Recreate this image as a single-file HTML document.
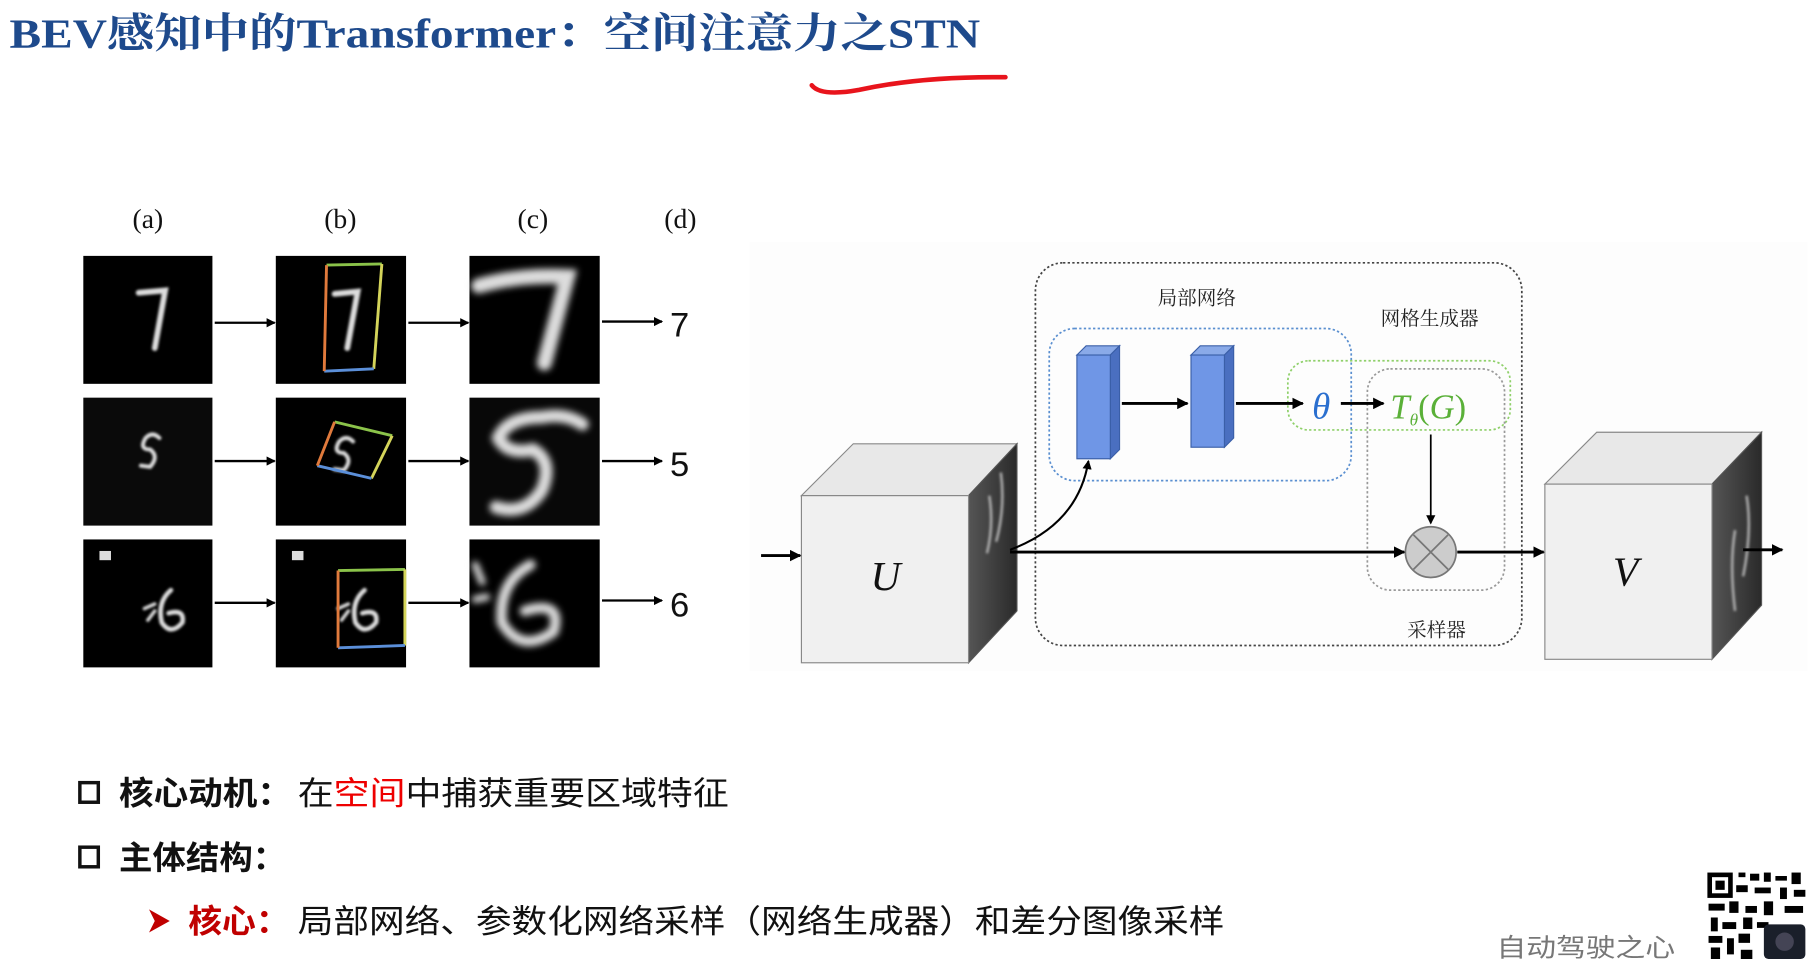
<!DOCTYPE html>
<html><head><meta charset="utf-8"><style>
html,body{margin:0;padding:0;background:#fff;overflow:hidden}
svg{display:block}
</style></head><body>
<svg width="1808" height="959" viewBox="0 0 1568 832" xmlns="http://www.w3.org/2000/svg">
<defs>
<filter id="bl" x="-50%" y="-50%" width="200%" height="200%"><feGaussianBlur stdDeviation="1.2"/></filter>
<filter id="bl2" x="-50%" y="-50%" width="200%" height="200%"><feGaussianBlur stdDeviation="3"/></filter>
<marker id="ah" markerWidth="8" markerHeight="8" refX="7" refY="4" orient="auto" markerUnits="userSpaceOnUse"><path d="M0,0 L8,4 L0,8 z" fill="#000"/></marker>
<marker id="ah2" markerWidth="10" markerHeight="10" refX="9" refY="5" orient="auto" markerUnits="userSpaceOnUse"><path d="M0,0 L10,5 L0,10 z" fill="#000"/></marker>
<linearGradient id="side" x1="0" x2="1"><stop offset="0" stop-color="#555"/><stop offset="1" stop-color="#2a2a2a"/></linearGradient>
</defs>

<text x="8" y="41" font-size="36" font-weight="bold" fill="#1e4a8c" font-family="'Liberation Serif','Noto Serif CJK SC',serif" textLength="842" lengthAdjust="spacingAndGlyphs">BEV感知中的Transformer：空间注意力之STN</text>
<path d="M704,74 Q712,84 745,78 Q800,66 872,67" stroke="#e8141c" stroke-width="4" fill="none" stroke-linecap="round"/>

<g font-family="'Liberation Serif',serif" font-size="24" fill="#111" text-anchor="middle">
<text x="128" y="198">(a)</text><text x="295" y="198">(b)</text><text x="462" y="198">(c)</text><text x="590" y="198">(d)</text>
</g>

<g fill="#000">
<rect x="72" y="222" width="112" height="111"/><rect x="239" y="222" width="113" height="111"/><rect x="407" y="222" width="113" height="111"/>
<rect x="72" y="345" width="112" height="111" fill="#0a0a0a"/><rect x="239" y="345" width="113" height="111"/><rect x="407" y="345" width="113" height="111" fill="#080808"/>
<rect x="72" y="468" width="112" height="111"/><rect x="239" y="468" width="113" height="111"/><rect x="407" y="468" width="113" height="111"/>
</g>
<g stroke="#ddd" fill="none" stroke-linecap="round" filter="url(#bl)">
<path d="M120,254 L143,252 L134,302" stroke-width="5"/>
<path d="M290,255 L310,253 L301,302" stroke-width="5"/>
<path d="M138,380 Q132,374 126,380 Q120,390 130,390 Q138,396 130,405 L122,404" stroke-width="3.5"/>
<path d="M306,383 Q300,377 294,383 Q288,393 298,393 Q306,399 298,408 L290,407" stroke-width="3.5"/>
<path d="M148,512 Q136,522 140,540 Q148,552 158,540 Q160,528 146,532" stroke-width="4"/>
<path d="M316,512 Q304,522 308,540 Q316,552 326,540 Q328,528 314,532" stroke-width="4"/>
<path d="M125,528 L134,524 M128,538 L134,530" stroke-width="3"/>
<path d="M293,528 L302,524 M296,538 L302,530" stroke-width="3"/>
</g>
<g fill="#ddd"><rect x="86" y="478" width="10" height="8"/><rect x="253" y="478" width="10" height="8"/></g>
<g stroke="#ddd" fill="none" stroke-linecap="round" filter="url(#bl2)">
<path d="M415,248 Q450,238 492,240 L472,315" stroke-width="13"/>
<path d="M505,368 Q490,358 470,362 Q440,362 432,380 Q440,395 462,390 Q480,400 470,425 Q455,448 430,440" stroke-width="11"/>
<path d="M460,490 Q432,505 435,540 Q452,568 480,548 Q488,520 455,530" stroke-width="9"/>
<path d="M412,490 L418,505 M412,520 L422,518" stroke-width="6"/>
</g>
<g fill="none" stroke-width="2.5">
<path d="M283,230 L331,229" stroke="#8bc34a"/><path d="M331,229 L324,320" stroke="#d4d45a"/><path d="M324,320 L281,322" stroke="#5b8fd9"/><path d="M281,322 L283,230" stroke="#e07a3c"/>
<path d="M290,366 L340,378" stroke="#8bc34a"/><path d="M340,378 L322,415" stroke="#d4d45a"/><path d="M322,415 L275,404" stroke="#5b8fd9"/><path d="M275,404 L290,366" stroke="#e07a3c"/>
<path d="M293,495 L351,494" stroke="#8bc34a"/><path d="M351,494 L351,560" stroke="#d4d45a"/><path d="M351,560 L293,562" stroke="#5b8fd9"/><path d="M293,562 L293,495" stroke="#e07a3c"/>
</g>
<g stroke="#000" stroke-width="2" marker-end="url(#ah)">
<line x1="186" y1="280" x2="238" y2="280"/><line x1="354" y1="280" x2="406" y2="280"/><line x1="522" y1="279" x2="574" y2="279"/>
<line x1="186" y1="400" x2="238" y2="400"/><line x1="354" y1="400" x2="406" y2="400"/><line x1="522" y1="400" x2="574" y2="400"/>
<line x1="186" y1="523" x2="238" y2="523"/><line x1="354" y1="523" x2="406" y2="523"/><line x1="522" y1="521" x2="574" y2="521"/>
</g>
<g font-family="'Liberation Sans',sans-serif" font-size="30" fill="#111">
<text x="581" y="292">7</text><text x="581" y="413">5</text><text x="581" y="535">6</text>
</g>

<rect x="650" y="210" width="918" height="372" fill="#fdfdfd"/>

<rect x="898" y="228" width="422" height="332" rx="24" fill="none" stroke="#444" stroke-width="1.5" stroke-dasharray="2 2"/>
<text x="1038" y="264" text-anchor="middle" font-size="17" fill="#222" font-family="'Liberation Serif','Noto Serif CJK SC',serif">局部网络</text>
<text x="1240" y="282" text-anchor="middle" font-size="17" fill="#222" font-family="'Liberation Serif','Noto Serif CJK SC',serif">网格生成器</text>
<text x="1246" y="552" text-anchor="middle" font-size="17" fill="#222" font-family="'Liberation Serif','Noto Serif CJK SC',serif">采样器</text>

<rect x="910" y="285" width="262" height="132" rx="22" fill="none" stroke="#5a8fd0" stroke-width="1.5" stroke-dasharray="2 2"/>
<rect x="1117" y="313" width="193" height="60" rx="18" fill="none" stroke="#8fd06a" stroke-width="1.5" stroke-dasharray="2 2"/>
<rect x="1186" y="320" width="119" height="192" rx="20" fill="none" stroke="#999" stroke-width="1.5" stroke-dasharray="2 2"/>

<g stroke="#3a5fa8" stroke-width="1">
<polygon points="934,308 942,300 971,300 963,308" fill="#8aaae8"/>
<polygon points="963,308 971,300 971,390 963,398" fill="#4a6fc0"/>
<rect x="934" y="308" width="29" height="90" fill="#6f96e6"/>
<polygon points="1033,308 1041,300 1070,300 1062,308" fill="#8aaae8"/>
<polygon points="1062,308 1070,300 1070,380 1062,388" fill="#4a6fc0"/>
<rect x="1033" y="308" width="29" height="80" fill="#6f96e6"/>
</g>
<g stroke="#000" stroke-width="2.5" marker-end="url(#ah2)">
<line x1="973" y1="350" x2="1030" y2="350"/>
<line x1="1072" y1="350" x2="1130" y2="350"/>
<line x1="1163" y1="350" x2="1200" y2="350"/>
</g>
<text x="1146" y="363" text-anchor="middle" font-size="32" font-style="italic" fill="#2a6fcf" font-family="'Liberation Serif',serif">θ</text>
<text x="1206" y="363" font-size="30" font-style="italic" fill="#5ab038" font-family="'Liberation Serif',serif">T<tspan font-size="15" dy="6">θ</tspan><tspan dy="-6" font-style="normal">(</tspan>G<tspan font-style="normal">)</tspan></text>
<line x1="1241" y1="377" x2="1241" y2="454" stroke="#000" stroke-width="1.5" marker-end="url(#ah)"/>
<circle cx="1241" cy="479" r="22" fill="#ccc" stroke="#777" stroke-width="1.5"/>
<path d="M1226,464 L1256,494 M1256,464 L1226,494" stroke="#777" stroke-width="1.5"/>

<polygon points="695,430 740,385 882,385 840,430" fill="#e8e8e8" stroke="#888"/>
<polygon points="840,430 882,385 882,530 840,575" fill="url(#side)" stroke="#555"/>
<rect x="695" y="430" width="145" height="145" fill="#f0f0f0" stroke="#888"/>
<path d="M858,430 Q862,455 856,480 M868,410 Q872,440 864,470" stroke="#bbb" stroke-width="2" fill="none" filter="url(#bl)"/>
<text x="768" y="512" text-anchor="middle" font-size="36" font-style="italic" fill="#111" font-family="'Liberation Serif',serif">U</text>
<polygon points="1340,420 1385,375 1528,375 1485,420" fill="#e8e8e8" stroke="#888"/>
<polygon points="1485,420 1528,375 1528,525 1485,572" fill="url(#side)" stroke="#555"/>
<rect x="1340" y="420" width="145" height="152" fill="#f0f0f0" stroke="#888"/>
<path d="M1505,460 Q1500,490 1505,530 M1515,430 Q1520,460 1512,500" stroke="#bbb" stroke-width="2" fill="none" filter="url(#bl)"/>
<text x="1410" y="508" text-anchor="middle" font-size="36" font-style="italic" fill="#111" font-family="'Liberation Serif',serif">V</text>

<g stroke="#000" stroke-width="2.5" fill="none">
<line x1="660" y1="482" x2="694" y2="482" marker-end="url(#ah2)"/>
<line x1="876" y1="479" x2="1218" y2="479" marker-end="url(#ah2)"/>
<line x1="1264" y1="479" x2="1339" y2="479" marker-end="url(#ah2)"/>
<line x1="1512" y1="477" x2="1546" y2="477" marker-end="url(#ah2)"/>
<path d="M876,477 Q935,455 944,400" stroke-width="1.8" marker-end="url(#ah)"/>
</g>

<g font-size="28" fill="#111" font-family="'Liberation Sans','Noto Sans CJK SC',sans-serif">
<rect x="69" y="679" width="16" height="17" fill="none" stroke="#111" stroke-width="3"/>
<text x="103" y="698" font-weight="bold" textLength="150" lengthAdjust="spacingAndGlyphs">核心动机：</text>
<text x="258" y="698" textLength="374" lengthAdjust="spacingAndGlyphs">在<tspan fill="#e00">空间</tspan>中捕获重要区域特征</text>
<rect x="69" y="735" width="16" height="17" fill="none" stroke="#111" stroke-width="3"/>
<text x="103" y="754" font-weight="bold" textLength="145" lengthAdjust="spacingAndGlyphs">主体结构：</text>
<path d="M129,789 L147,799 L129,809 L134,799 z" fill="#c00000"/>
<text x="163" y="809" font-weight="bold" fill="#c00000" textLength="88" lengthAdjust="spacingAndGlyphs">核心：</text>
<text x="258" y="809" textLength="804" lengthAdjust="spacingAndGlyphs">局部网络、参数化网络采样（网络生成器）和差分图像采样</text>
</g>
<text x="1298" y="830" font-size="22" fill="#777" font-family="'Liberation Sans','Noto Sans CJK SC',sans-serif" textLength="155" lengthAdjust="spacingAndGlyphs">自动驾驶之心</text>

<g>
<rect x="1480" y="755" width="88" height="77" fill="#fff"/>
<rect x="1481" y="757" width="22" height="22" fill="#000"/><rect x="1485" y="761" width="14" height="14" fill="#fff"/><rect x="1488" y="764" width="8" height="8" fill="#000"/>
<g fill="#000">
<rect x="1508" y="757" width="6" height="4"/><rect x="1518" y="758" width="8" height="6"/><rect x="1530" y="757" width="6" height="8"/><rect x="1540" y="760" width="10" height="4"/><rect x="1554" y="757" width="8" height="10"/>
<rect x="1506" y="768" width="10" height="6"/><rect x="1522" y="770" width="14" height="5"/><rect x="1544" y="770" width="6" height="10"/><rect x="1556" y="772" width="10" height="6"/>
<rect x="1482" y="784" width="14" height="6"/><rect x="1500" y="782" width="8" height="10"/><rect x="1514" y="786" width="10" height="6"/><rect x="1530" y="782" width="8" height="12"/><rect x="1548" y="786" width="16" height="6"/>
<rect x="1484" y="796" width="6" height="12"/><rect x="1494" y="800" width="12" height="6"/><rect x="1512" y="796" width="8" height="10"/><rect x="1524" y="800" width="10" height="5"/>
<rect x="1482" y="812" width="12" height="6"/><rect x="1498" y="814" width="6" height="14"/><rect x="1508" y="810" width="10" height="8"/><rect x="1484" y="822" width="8" height="10"/><rect x="1510" y="824" width="10" height="8"/>
</g>
<rect x="1530" y="802" width="36" height="30" rx="4" fill="#1a1f2a"/>
<circle cx="1548" cy="817" r="8" fill="#445"/>
</g>
</svg>
</body></html>
